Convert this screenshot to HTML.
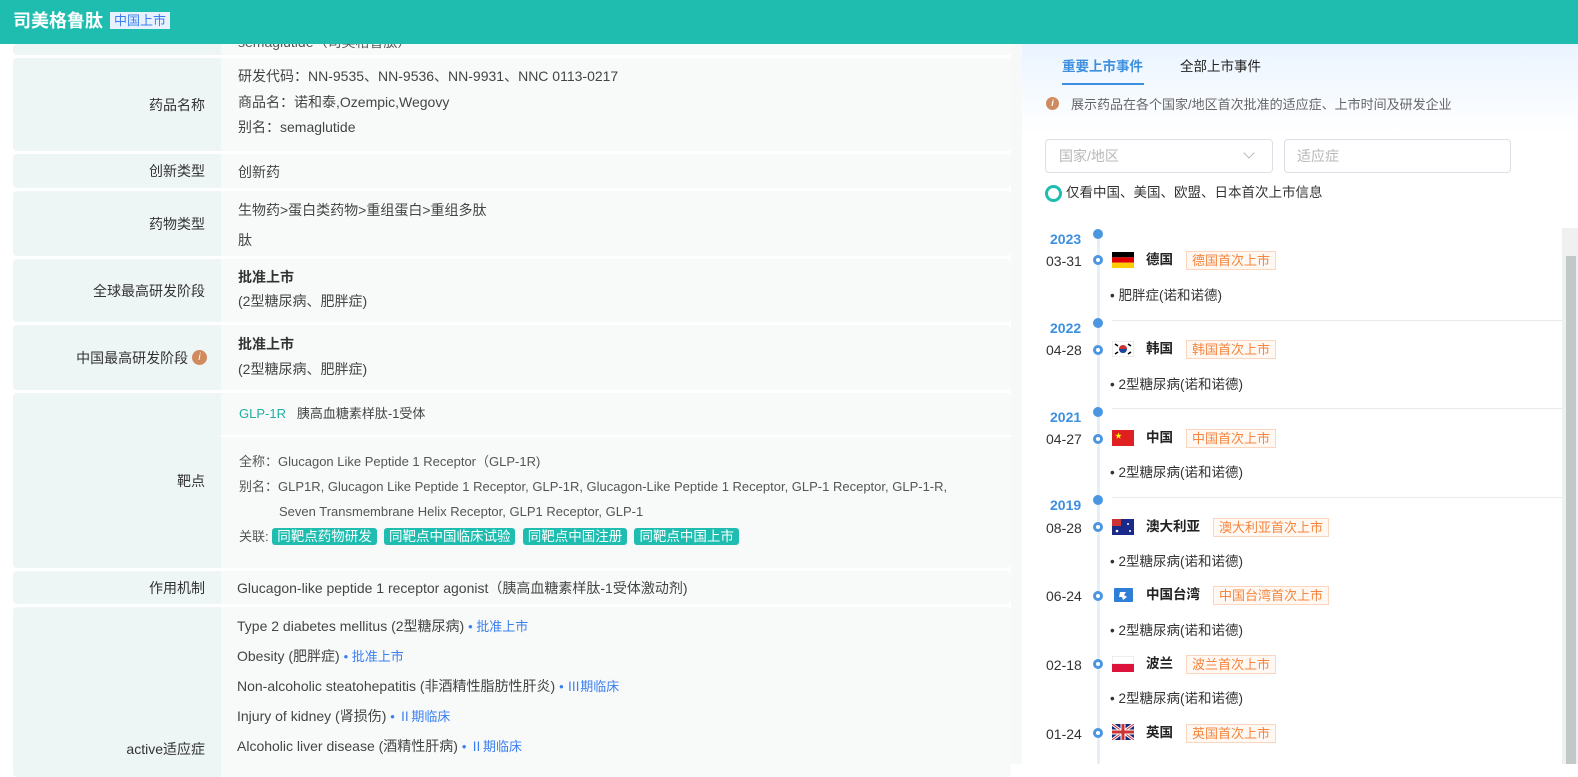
<!DOCTYPE html>
<html><head><meta charset="utf-8"><style>
*{margin:0;padding:0;box-sizing:border-box}
body{width:1578px;height:764px;overflow:hidden;background:#fff;font-family:"Liberation Sans","Noto Sans CJK SC",sans-serif;font-size:14px;color:#333;position:relative}
.a{position:absolute;white-space:nowrap;line-height:20px}
.hd{left:0;top:0;width:1578px;height:44px;background:#1fbdb0}
.lb{background:#eef5f5;border-radius:4px 0 0 4px;left:13px;width:208px;text-align:right;padding-right:16px;display:flex;align-items:center;justify-content:flex-end;color:#333}
.vl{background:#f8fafa;left:221px;width:790px;border-radius:0 4px 4px 0}
.t{color:#444}
.tag{background:#1fbdb0;color:#fff;border-radius:3px;padding:1px 5px;font-size:13.5px}
.blue{color:#3a7ff0}
.dt{color:#333;font-size:14px}
.yr{color:#3d8fe0;font-weight:bold;font-size:14px}
.dot{width:10px;height:10px;border-radius:50%;background:#4a96e0}
.odot{width:10px;height:10px;border-radius:50%;border:3px solid #4a96e0;background:#fff}
.cn{font-weight:bold;color:#222;font-size:13.5px}
.ot{border:1px solid #fbd5bd;background:#fff8f3;color:#f5843c;font-size:13px;padding:0 5px;height:19px;line-height:17px}
.dz{color:#333;font-size:13.5px}
.sep{left:1112px;width:450px;height:1px;background:#eaeaea}
</style></head><body>
<div class="a hd"></div>
<div class="a" style="left:13px;top:10px;color:#fff;font-weight:bold;font-size:18px;line-height:22px">司美格鲁肽</div>
<div class="a" style="left:110px;top:12px;background:#e8f1ff;color:#3a7ff0;font-size:13px;padding:0 4px;height:17px;line-height:17px">中国上市</div>

<div class="a lb" style="top:44px;height:11px"></div><div class="a vl" style="top:44px;height:11px"></div>
<div class="a t" style="left:238px;top:32px;color:#555">semaglutide（司美格鲁肽）</div>
<div class="a hd" style="height:44px"></div>
<div class="a" style="left:13px;top:10px;color:#fff;font-weight:bold;font-size:18px;line-height:22px">司美格鲁肽</div>
<div class="a" style="left:110px;top:12px;background:#e8f1ff;color:#3a7ff0;font-size:13px;padding:0 4px;height:17px;line-height:17px">中国上市</div>
<div class="a lb" style="top:58px;height:93px">药品名称</div><div class="a vl" style="top:58px;height:93px"></div>
<div class="a t" style="left:238px;top:66px">研发代码：NN-9535、NN-9536、NN-9931、NNC 0113-0217</div>
<div class="a t" style="left:238px;top:92px">商品名：诺和泰,Ozempic,Wegovy</div>
<div class="a t" style="left:238px;top:117px">别名：semaglutide</div>
<div class="a lb" style="top:154px;height:34px">创新类型</div><div class="a vl" style="top:154px;height:34px"></div>
<div class="a t" style="left:238px;top:162px">创新药</div>
<div class="a lb" style="top:191px;height:65px">药物类型</div><div class="a vl" style="top:191px;height:65px"></div>
<div class="a t" style="left:238px;top:200px">生物药&gt;蛋白类药物&gt;重组蛋白&gt;重组多肽</div>
<div class="a t" style="left:238px;top:230px">肽</div>
<div class="a lb" style="top:259px;height:63px">全球最高研发阶段</div><div class="a vl" style="top:259px;height:63px"></div>
<div class="a" style="left:238px;top:267px;font-weight:bold;color:#333">批准上市</div>
<div class="a t" style="left:238px;top:291px">(2型糖尿病、肥胖症)</div>
<div class="a lb" style="top:325px;height:65px;padding-right:14px">中国最高研发阶段&nbsp;<span style="display:inline-block;width:15px;height:15px;border-radius:50%;background:#d08a5e;color:#fff;font-size:10px;line-height:15px;text-align:center;font-style:italic">i</span></div><div class="a vl" style="top:325px;height:65px"></div>
<div class="a" style="left:238px;top:334px;font-weight:bold;color:#333">批准上市</div>
<div class="a t" style="left:238px;top:359px">(2型糖尿病、肥胖症)</div>
<div class="a lb" style="top:393px;height:175px">靶点</div><div class="a vl" style="top:393px;height:175px"></div>
<div class="a" style="left:221px;top:435px;width:790px;height:2px;background:#fff"></div>
<div class="a" style="left:239px;top:404px;font-size:13px"><span style="color:#1fb0a3">GLP-1R</span>&nbsp;&nbsp; <span class="t">胰高血糖素样肽-1受体</span></div>
<div class="a" style="left:239px;top:452px;font-size:13px;color:#555">全称：Glucagon Like Peptide 1 Receptor（GLP-1R)</div>
<div class="a" style="left:239px;top:477px;font-size:13px;color:#555">别名：GLP1R, Glucagon Like Peptide 1 Receptor, GLP-1R, Glucagon-Like Peptide 1 Receptor, GLP-1 Receptor, GLP-1-R,</div>
<div class="a" style="left:279px;top:502px;font-size:13px;color:#555">Seven Transmembrane Helix Receptor, GLP1 Receptor, GLP-1</div>
<div class="a" style="left:239px;top:527px;font-size:13px;color:#555">关联: <span class="tag">同靶点药物研发</span>&nbsp;&nbsp;<span class="tag">同靶点中国临床试验</span>&nbsp;&nbsp;<span class="tag">同靶点中国注册</span>&nbsp;&nbsp;<span class="tag">同靶点中国上市</span></div>
<div class="a lb" style="top:571px;height:33px">作用机制</div><div class="a vl" style="top:571px;height:33px"></div>
<div class="a t" style="left:237px;top:578px">Glucagon-like peptide 1 receptor agonist（胰高血糖素样肽-1受体激动剂)</div>
<div class="a lb" style="top:607px;height:170px;align-items:flex-end;padding-bottom:18px">active适应症</div><div class="a vl" style="top:607px;height:170px"></div>
<div class="a t" style="left:237px;top:616px">Type 2 diabetes mellitus (2型糖尿病) <span class="blue" style="font-size:13px">• 批准上市</span></div>
<div class="a t" style="left:237px;top:646px">Obesity (肥胖症) <span class="blue" style="font-size:13px">• 批准上市</span></div>
<div class="a t" style="left:237px;top:676px">Non-alcoholic steatohepatitis (非酒精性脂肪性肝炎) <span class="blue" style="font-size:13px">• Ⅲ期临床</span></div>
<div class="a t" style="left:237px;top:706px">Injury of kidney (肾损伤) <span class="blue" style="font-size:13px">• Ⅱ期临床</span></div>
<div class="a t" style="left:237px;top:736px">Alcoholic liver disease (酒精性肝病) <span class="blue" style="font-size:13px">• Ⅱ期临床</span></div>

<div class="a" style="left:1011px;top:44px;width:11px;height:720px;background:#f7f8f8"></div>
<div class="a" style="left:1022px;top:44px;width:556px;height:90px;background:linear-gradient(#eaf4ff,#fff)"></div>
<div class="a" style="left:1062px;top:57px;color:#3d8fe0;font-weight:bold;font-size:13.5px">重要上市事件</div>
<div class="a" style="left:1062px;top:83px;width:82px;height:2px;background:#3d8fe0"></div>
<div class="a" style="left:1180px;top:57px;color:#222;font-size:13.5px">全部上市事件</div>
<div class="a" style="left:1046px;top:97px;width:13px;height:13px;border-radius:50%;background:#d08a5e;color:#fff;font-size:9px;text-align:center;line-height:13px;font-style:italic;font-weight:bold">i</div>
<div class="a" style="left:1071px;top:95px;color:#666;font-size:13px">展示药品在各个国家/地区首次批准的适应症、上市时间及研发企业</div>
<div class="a" style="left:1045px;top:139px;width:228px;height:34px;border:1px solid #dcdfe6;border-radius:4px"></div>
<div class="a" style="left:1059px;top:146px;color:#b8b8b8;font-size:14px">国家/地区</div>
<div class="a" style="left:1245px;top:149px;width:8px;height:8px;border-right:1px solid #bbb;border-bottom:1px solid #bbb;transform:rotate(45deg)"></div>
<div class="a" style="left:1284px;top:139px;width:227px;height:34px;border:1px solid #dcdfe6;border-radius:4px"></div>
<div class="a" style="left:1297px;top:146px;color:#b8b8b8;font-size:14px">适应症</div>
<div class="a" style="left:1045px;top:185px;width:17px;height:17px;border-radius:50%;border:3px solid #1fbdb0"></div>
<div class="a" style="left:1066px;top:183px;color:#333;font-size:13.5px">仅看中国、美国、欧盟、日本首次上市信息</div>
<div class="a" style="left:1562px;top:228px;width:16px;height:536px;background:#f0f0f0"></div>
<div class="a" style="left:1566px;top:256px;width:10px;height:508px;background:#c1c8c8"></div>

<div class="a" style="left:1097px;top:236px;width:3px;height:528px;background:#e6eef8"></div>
<div class="a sep" style="top:320px"></div><div class="a sep" style="top:408px"></div><div class="a sep" style="top:497px"></div>

<div class="a yr" style="left:1050px;top:229px">2023</div><div class="a dot" style="left:1093px;top:229px"></div>
<div class="a dt" style="left:1046px;top:251px">03-31</div><div class="a odot" style="left:1093px;top:255px"></div>
<svg class="a" style="left:1112px;top:252px" width="22" height="16"><rect width="22" height="5.3" fill="#000"/><rect y="5.3" width="22" height="5.4" fill="#d00"/><rect y="10.7" width="22" height="5.3" fill="#fc0"/></svg>
<div class="a cn" style="left:1146px;top:250px">德国</div><div class="a ot" style="left:1186px;top:251px">德国首次上市</div>
<div class="a dz" style="left:1110px;top:286px">• 肥胖症(诺和诺德)</div>

<div class="a yr" style="left:1050px;top:318px">2022</div><div class="a dot" style="left:1093px;top:318px"></div>
<div class="a dt" style="left:1046px;top:340px">04-28</div><div class="a odot" style="left:1093px;top:345px"></div>
<svg class="a" style="left:1112px;top:341px" width="22" height="16"><rect width="22" height="16" fill="#fff" stroke="#ddd"/><circle cx="11" cy="8" r="4" fill="#c33"/><path d="M7 8a4 4 0 0 0 8 0z" fill="#1848a0"/><path d="M3 3l3 2M16 3l3 2M3 13l3-2M16 13l3-2" stroke="#000" stroke-width="1.5"/></svg>
<div class="a cn" style="left:1146px;top:339px">韩国</div><div class="a ot" style="left:1186px;top:340px">韩国首次上市</div>
<div class="a dz" style="left:1110px;top:375px">• 2型糖尿病(诺和诺德)</div>

<div class="a yr" style="left:1050px;top:407px">2021</div><div class="a dot" style="left:1093px;top:407px"></div>
<div class="a dt" style="left:1046px;top:429px">04-27</div><div class="a odot" style="left:1093px;top:434px"></div>
<svg class="a" style="left:1112px;top:430px" width="22" height="16"><rect width="22" height="16" fill="#e02020"/><text x="3" y="8" fill="#ff0" font-size="7">★</text></svg>
<div class="a cn" style="left:1146px;top:428px">中国</div><div class="a ot" style="left:1186px;top:429px">中国首次上市</div>
<div class="a dz" style="left:1110px;top:463px">• 2型糖尿病(诺和诺德)</div>

<div class="a yr" style="left:1050px;top:495px">2019</div><div class="a dot" style="left:1093px;top:495px"></div>
<div class="a dt" style="left:1046px;top:518px">08-28</div><div class="a odot" style="left:1093px;top:522px"></div>
<svg class="a" style="left:1112px;top:519px" width="22" height="16"><rect width="22" height="16" fill="#1a2a8a"/><rect width="9" height="7" fill="#c33"/><circle cx="16" cy="5" r="1" fill="#fff"/><circle cx="5" cy="12" r="1.3" fill="#fff"/><circle cx="18" cy="12" r="1" fill="#fff"/></svg>
<div class="a cn" style="left:1146px;top:517px">澳大利亚</div><div class="a ot" style="left:1213px;top:518px">澳大利亚首次上市</div>
<div class="a dz" style="left:1110px;top:552px">• 2型糖尿病(诺和诺德)</div>

<div class="a dt" style="left:1046px;top:586px">06-24</div><div class="a odot" style="left:1093px;top:591px"></div>
<svg class="a" style="left:1114px;top:588px" width="19" height="14"><rect width="19" height="14" rx="1" fill="#2f7fd8"/><path d="M6 4h6l-2 3 3 2-4 3-1-3H5z" fill="#fff"/></svg>
<div class="a cn" style="left:1146px;top:585px">中国台湾</div><div class="a ot" style="left:1213px;top:586px">中国台湾首次上市</div>
<div class="a dz" style="left:1110px;top:621px">• 2型糖尿病(诺和诺德)</div>

<div class="a dt" style="left:1046px;top:655px">02-18</div><div class="a odot" style="left:1093px;top:659px"></div>
<svg class="a" style="left:1112px;top:656px" width="22" height="16"><rect width="22" height="8" fill="#fff" stroke="#ddd"/><rect y="8" width="22" height="8" fill="#dc143c"/></svg>
<div class="a cn" style="left:1146px;top:654px">波兰</div><div class="a ot" style="left:1186px;top:655px">波兰首次上市</div>
<div class="a dz" style="left:1110px;top:689px">• 2型糖尿病(诺和诺德)</div>

<div class="a dt" style="left:1046px;top:724px">01-24</div><div class="a odot" style="left:1093px;top:728px"></div>
<svg class="a" style="left:1112px;top:724px" width="22" height="16"><rect width="22" height="16" fill="#1a2a7a"/><path d="M0 0L22 16M22 0L0 16" stroke="#fff" stroke-width="3"/><path d="M0 0L22 16M22 0L0 16" stroke="#c33" stroke-width="1"/><path d="M11 0v16M0 8h22" stroke="#fff" stroke-width="5"/><path d="M11 0v16M0 8h22" stroke="#c33" stroke-width="3"/></svg>
<div class="a cn" style="left:1146px;top:723px">英国</div><div class="a ot" style="left:1186px;top:724px">英国首次上市</div>
</body></html>
